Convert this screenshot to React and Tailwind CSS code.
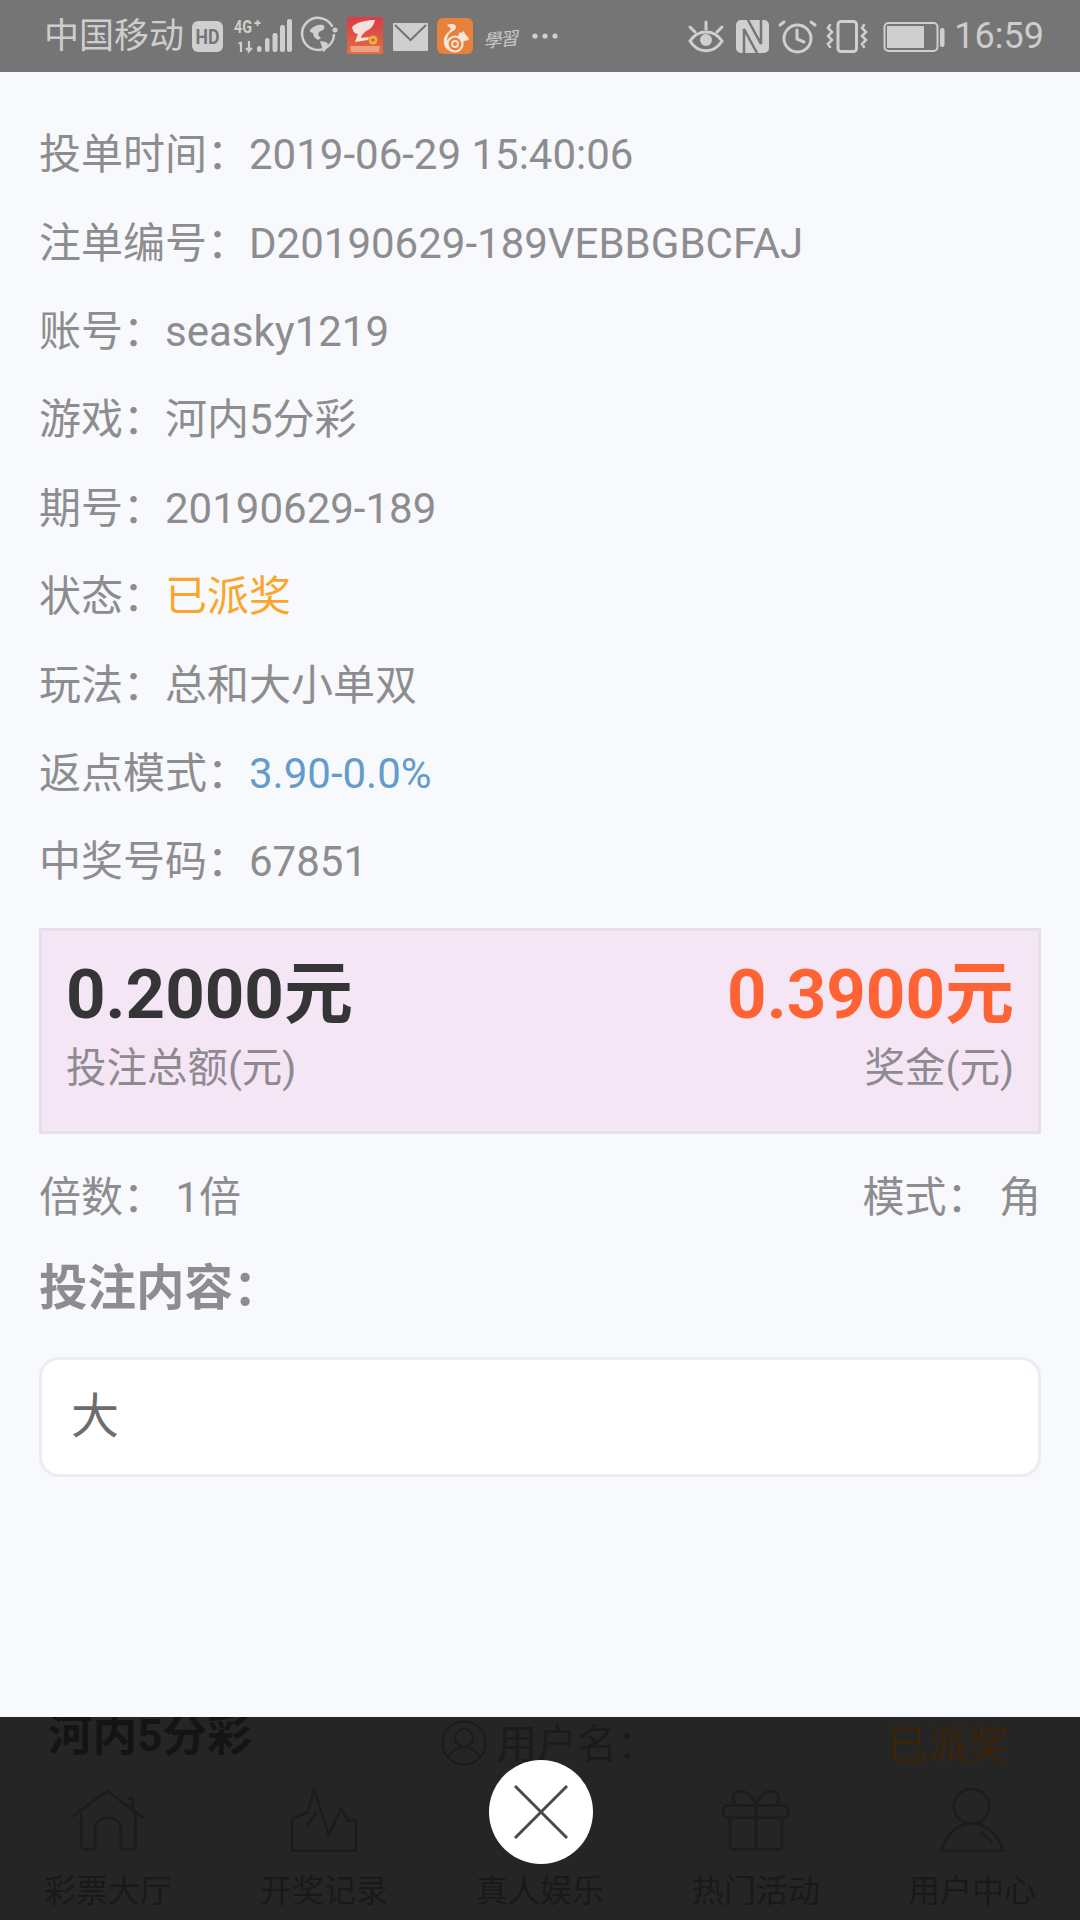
const FONT = "font-['Roboto','Noto_Sans_CJK_SC',sans-serif]";
const L = "#cfcfcf";
const BG = "#757575";

function Row({ label, value, color = "text-[#8d8d8f]" }) {
  return (
    <div className="h-[88.4px] flex items-center text-[42px] leading-none text-[#8d8d8f] whitespace-nowrap">
      <span>{label}</span>
      <span className={color}>{value}</span>
    </div>
  );
}

function StatusIcons() {
  return (
    <svg width="1080" height="72" viewBox="0 0 1080 72" className="absolute left-0 top-0" fill="none">
      {/* HD */}
      <rect x="192" y="21" width="31" height="31" rx="6" fill={L} />
      <text x="207.500" y="44" textAnchor="middle" fontSize="21" fontWeight="700" fill={BG} textLength="24" lengthAdjust="spacingAndGlyphs">HD</text>
      {/* 4G+ */}
      <text x="234" y="33" fontSize="19" fontWeight="700" fill={L} textLength="18" lengthAdjust="spacingAndGlyphs">4G</text>
      <path d="M257.500 20v6M254.500 23h6" stroke={L} strokeWidth="1.800" />
      <path d="M241 42v10M239 44l2-2M249 41v10l3-3M249 51l-3-3" stroke={L} strokeWidth="2.200" />
      <g fill={L}>
        <rect x="257" y="46" width="4.500" height="6" rx="2.200" />
        <rect x="265" y="38" width="4.500" height="14" rx="2.200" />
        <rect x="272.500" y="33" width="5" height="19" rx="2.300" />
        <rect x="280" y="25" width="5" height="27" rx="2.300" />
        <rect x="287" y="19" width="5" height="33" rx="2.300" />
      </g>
      {/* Globe */}
      <path d="M332 26a16 16 0 102 9" stroke={L} strokeWidth="2.500" strokeLinecap="round" />
      <path d="M310 30c3-4 9-6 13-5 2 1 2 3 0 5l-4 2-1 3 3 3-3 2-4-3-1-4-3-1z" fill={L} />
      <path d="M320 41l6 1 2 2-3 7-2 1-1-5z" fill={L} />
      <circle cx="335" cy="30" r="2.500" fill={L} />
      {/* Red app */}
      <defs>
        <linearGradient id="redapp" x1="0" y1="0" x2="0" y2="1">
          <stop offset="0" stopColor="#dc3a4a" />
          <stop offset="1" stopColor="#e2703f" />
        </linearGradient>
      </defs>
      <rect x="347" y="17" width="36" height="37" rx="1.500" fill="url(#redapp)" />
      <path d="M352 27c5-5 14-7 23-7-1 5-4 9-9 11l-4 4-1 3 8-1-1 3-13 2 3-8c-3 0-5-2-6-7z" fill="#f4e2dc" />
      <circle cx="373" cy="40" r="4.500" fill="#e8b040" />
      <circle cx="373" cy="40" r="1.600" fill="#b86a30" />
      <path d="M350 46h30l-1 6h-28z" fill="#e9a182" />
      {/* Mail */}
      <rect x="393" y="23" width="35" height="28" rx="1" fill={L} />
      <path d="M395 25l15.500 15L426 25" stroke={BG} strokeWidth="2" />
      {/* UC */}
      <rect x="437" y="18" width="36" height="36" rx="6" fill="#e9813a" />
      <path d="M447 25c4-2 9-1 9 2 0 3-4 4-6 6-4 4-3 9-1 13l2 5c-6-1-8-7-7-12 1-5 5-7 7-10-1-2-3-2-4-4z" fill="#f5e6da" />
      <circle cx="455" cy="44" r="7.500" stroke="#f5e6da" strokeWidth="2.200" />
      <circle cx="455" cy="44" r="3" stroke="#f5e6da" strokeWidth="1.800" />
      <path d="M458 36l2-4 1 1 3-2 1 3 3 3 1 3-5 1-2 3z" fill="#f5e6da" />
      {/* 學習 */}
      <text x="483" y="46" fontSize="18" fill="#c8c8c8" transform="rotate(-6 500 38)" fontStyle="italic" textLength="35" style={{ fontFamily: "'Noto Sans CJK TC', sans-serif" }}>學習</text>
      {/* Dots */}
      <circle cx="535" cy="36" r="2.600" fill={L} />
      <circle cx="545" cy="36" r="2.600" fill={L} />
      <circle cx="555" cy="36" r="2.600" fill={L} />
      {/* Eye */}
      <g stroke={L} strokeWidth="3" strokeLinecap="round">
        <path d="M690 41c8-12 24-12 32 0-8 13-24 13-32 0z" />
        <path d="M706 22v7M690 27l5 5M722 27l-5 5" />
      </g>
      <circle cx="706" cy="40" r="6" fill={L} />
      {/* NFC */}
      <rect x="736" y="20" width="33" height="33" rx="5" fill={L} />
      <path d="M744 53V29l13 24M761 20v24L748 20" stroke={BG} strokeWidth="2.500" />
      {/* Alarm */}
      <circle cx="797.500" cy="38.500" r="13.500" stroke={L} strokeWidth="3" />
      <path d="M797 30v9l7 3M784 22l-4 3M811 22l4 3" stroke={L} strokeWidth="3" strokeLinecap="round" />
      {/* Vibrate */}
      <rect x="838" y="21.500" width="18.500" height="30" rx="3" stroke={L} strokeWidth="3" />
      <path d="M830 25l-2 3 4 4-4 4 4 4-4 4 2 3M864 25l-2 3 4 4-4 4 4 4-4 4 2 3" stroke={L} strokeWidth="2.500" strokeLinecap="round" />
      {/* Battery */}
      <rect x="884.500" y="23" width="53" height="28" rx="4" stroke={L} strokeWidth="2" />
      <rect x="887" y="26" width="37" height="22" fill={L} />
      <rect x="940" y="28" width="4.500" height="19" rx="2" fill={L} />
    </svg>
  );
}

const STROKE = "#1c1c1c";

const NAV = [
  ["彩票大厅", (
    <svg key="h" width="74" height="62" viewBox="205 262 215 186" preserveAspectRatio="none" fill="none" stroke={STROKE} strokeWidth="8" strokeLinejoin="round">
      <path d="M208 345L310 268l105 80" />
      <path d="M235 335v95q0 12 12 12h28v-57a37 37 0 0175 0v57h30q12 0 12-12v-95" />
      <path d="M370 290h15v30" />
    </svg>
  )],
  ["开奖记录", (
    <svg key="c" width="66" height="64" viewBox="845 258 192 192" preserveAspectRatio="none" fill="none" stroke={STROKE} strokeWidth="8" strokeLinejoin="round">
      <path d="M848 350v96h186v-90h-24l-20-38-35 82-43-138-17 68-47 20" />
      <path d="M920 330l-30 45" />
    </svg>
  )],
  ["真人娱乐", <div key="s" className="h-[64px]" />],
  ["热门活动", (
    <svg key="g" width="70" height="62" viewBox="530 262 205 188" preserveAspectRatio="none" fill="none" stroke={STROKE} strokeWidth="8" strokeLinejoin="round">
      <rect x="537" y="312" width="190" height="37" rx="12" />
      <path d="M556 349v82q0 14 14 14h125q14 0 14-14v-82M632 312v133" />
      <path d="M632 312c-10-35-35-48-55-42-15 5-15 35 0 42zM632 312c10-35 35-48 55-42 15 5 15 35 0 42z" />
    </svg>
  )],
  ["用户中心", (
    <svg key="u" width="67" height="66" viewBox="1165 262 195 198" preserveAspectRatio="none" fill="none" stroke={STROKE} strokeWidth="8" strokeLinejoin="round">
      <circle cx="1260" cy="320" r="52" />
      <path d="M1172 454c10-40 40-82 88-82s82 42 92 82z" />
      <path d="M1285 400c16 6 28 18 35 32" />
    </svg>
  )],
];

export default function App() {
  return (
    <div className={`${FONT} relative w-[1080px] h-[1920px] overflow-hidden bg-[#f8f9fd] flex flex-col`}>
      {/* Status bar */}
      <div className="relative h-[72px] shrink-0 bg-[#757575] flex items-center justify-between pl-[44px] pr-[36px] text-[35px] text-[#cdcdcd] leading-none">
        <StatusIcons />
        <span className="relative">中国移动</span>
        <span className="relative text-[36px]">16:59</span>
      </div>

      {/* Details */}
      <div className="flex-1 px-[39px] pt-[39px]">
        <div className="pl-[2px] -ml-[2px]">
          <Row label="投单时间：" value="2019-06-29 15:40:06" />
          <Row label="注单编号：" value="D20190629-189VEBBGBCFAJ" />
          <Row label="账号：" value="seasky1219" />
          <Row label="游戏：" value="河内5分彩" />
          <Row label="期号：" value="20190629-189" />
          <Row label="状态：" value="已派奖" color="text-[#f9a62b]" />
          <Row label="玩法：" value="总和大小单双" />
          <Row label="返点模式：" value="3.90-0.0%" color="text-[#639ccb]" />
          <Row label="中奖号码：" value="67851" />
        </div>

        <div className="mt-[21px] h-[206px] border-[3px] border-[#e6e1e8] bg-[#f5e6f6] flex justify-between px-[24px] pt-[26px]">
          <div>
            <div className="text-[69px] font-bold leading-[76px] text-[#353437]">0.2000元</div>
            <div className="text-[40.500px] leading-[48px] text-[#8f8a92] mt-[11px]">投注总额(元)</div>
          </div>
          <div className="text-right">
            <div className="text-[69px] font-bold leading-[76px] text-[#ff6333]">0.3900元</div>
            <div className="text-[40.500px] leading-[48px] text-[#8f8a92] mt-[11px]">奖金(元)</div>
          </div>
        </div>

        <div className="mt-[30px] h-[68px] flex items-center justify-between text-[42px] leading-none text-[#8d8d8f]">
          <span>倍数：&nbsp;1倍</span>
          <span>模式：&nbsp;角</span>
        </div>

        <div className="mt-[24px] h-[68px] flex items-center text-[48.500px] font-bold leading-none text-[#8d8d8f]">投注内容：</div>

        <div className="mt-[33px] h-[120px] rounded-[20px] border-[3px] border-[#ecedf3] bg-white flex items-center pl-[29px] text-[48px] leading-none text-[#6d6d6d]">大</div>
      </div>

      {/* Dim overlay */}
      <div className="relative h-[203px] shrink-0 bg-[#252525]">
        <div className="h-[60px] border-b border-[#212121] relative overflow-hidden">
          <span className="absolute left-[48px] top-[-3px] text-[44.500px] font-bold leading-none text-[#141414]">河内5分彩</span>
          <svg className="absolute left-[441px] top-[3px]" width="46" height="46" viewBox="0 0 46 46" fill="none" stroke="#1b1b1b" strokeWidth="2">
            <circle cx="23" cy="23" r="21.500" />
            <circle cx="23" cy="18" r="9" />
            <path d="M7 38c3-8 10-11 16-11s13 3 16 11" />
          </svg>
          <span className="absolute left-[497px] top-[8px] text-[40px] leading-none text-[#1b1b1b]">用户名：</span>
          <span className="absolute left-[886px] top-[8px] text-[41px] leading-none text-[#3a2308]">已派奖</span>
        </div>
        <div className="grid grid-cols-5 pt-[10px]">
          {NAV.map(([t, icon]) => (
            <div key={t} className="flex flex-col items-center">
              <div className="h-[66px] flex items-center">{icon}</div>
              <div className="mt-[22px] text-[32px] leading-none text-[#191919]">{t}</div>
            </div>
          ))}
        </div>

        {/* Close button */}
        <div className="absolute left-[489px] top-[43px] w-[104px] h-[104px] rounded-full bg-white flex items-center justify-center">
          <svg width="56" height="56" viewBox="0 0 56 56" stroke="#4a4a4a" strokeWidth="3" fill="none">
            <path d="M2 2l52 52M54 2L2 54" />
          </svg>
        </div>
      </div>
    </div>
  );
}
